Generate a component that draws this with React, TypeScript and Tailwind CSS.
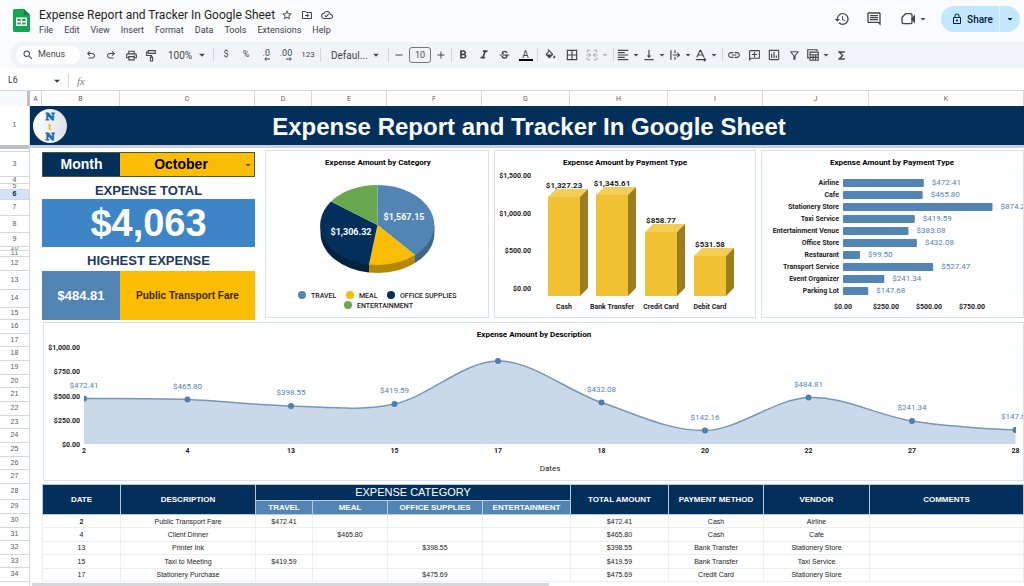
import { useState } from 'react';
import type { ReactNode } from 'react';
import {
  MdAdd,
  MdArrowDropDown,
  MdBorderAll,
  MdFormatAlignLeft,
  MdFormatBold,
  MdFormatItalic,
  MdFunctions,
  MdHistory,
  MdLink,
  MdLockOutline,
  MdOutlineAddComment,
  MdOutlineCloudDone,
  MdOutlineFilterAlt,
  MdOutlineInsertChart,
  MdOutlineInsertComment,
  MdOutlinePrint,
  MdRemove,
  MdSearch,
  MdStarBorder,
  MdStrikethroughS,
  MdVerticalAlignBottom,
} from 'react-icons/md';

const MENUS = ['File', 'Edit', 'View', 'Insert', 'Format', 'Data', 'Tools', 'Extensions', 'Help'];

const COLUMNS = [
  { name: 'A', width: 'w-3' },
  { name: 'B', width: 'w-[78px]' },
  { name: 'C', width: 'w-[135px]' },
  { name: 'D', width: 'w-[57px]' },
  { name: 'E', width: 'w-[75px]' },
  { name: 'F', width: 'w-[95px]' },
  { name: 'G', width: 'w-[88px]' },
  { name: 'H', width: 'w-[98px]' },
  { name: 'I', width: 'w-[95px]' },
  { name: 'J', width: 'w-[106px]' },
  { name: 'K', width: 'flex-1' },
];

const TOP_ROWS = [
  { n: 3, height: 'h-[25px]' },
  { n: 4, height: 'h-[7px]' },
  { n: 5, height: 'h-[6px]' },
  { n: 6, height: 'h-[10px]' },
  { n: 7, height: 'h-4' },
  { n: 8, height: 'h-[17px]' },
  { n: 9, height: 'h-[14px]' },
  { n: 10, height: 'h-1' },
  { n: 11, height: 'h-[6px]' },
  { n: 12, height: 'h-[14px]' },
  { n: 13, height: 'h-[19px]' },
  { n: 14, height: 'h-[18px]' },
  { n: 15, height: 'h-3' },
];

const CHART_ROWS = [16, 17, 18, 19, 20, 21, 22, 23, 24, 25, 26, 27];
const DATA_ROWS = [30, 31, 32, 33, 34];

const PAYMENT_TYPES = [
  { label: 'Cash', value: '$1,327.23', x: 54, top: 47 },
  { label: 'Bank Transfer', value: '$1,345.61', x: 102, top: 45 },
  { label: 'Credit Card', value: '$858.77', x: 151, top: 82 },
  { label: 'Debit Card', value: '$531.58', x: 200, top: 106 },
];

const VENDORS = [
  { label: 'Airline', amount: 472.41 },
  { label: 'Cafe', amount: 465.8 },
  { label: 'Stationery Store', amount: 874.24 },
  { label: 'Taxi Service', amount: 419.59 },
  { label: 'Entertainment Venue', amount: 383.08 },
  { label: 'Office Store', amount: 432.08 },
  { label: 'Restaurant', amount: 99.5 },
  { label: 'Transport Service', amount: 527.47 },
  { label: 'Event Organizer', amount: 241.34 },
  { label: 'Parking Lot', amount: 147.68 },
];

const DAILY = [
  { day: 2, label: '$472.41', y: 75.5 },
  { day: 4, label: '$465.80', y: 76.5 },
  { day: 13, label: '$398.55', y: 83 },
  { day: 15, label: '$419.59', y: 81 },
  { day: 17, label: '', y: 38 },
  { day: 18, label: '$432.08', y: 79.5 },
  { day: 20, label: '$142.16', y: 107.5 },
  { day: 22, label: '$484.81', y: 74.5 },
  { day: 27, label: '$241.34', y: 98 },
  { day: 28, label: '$147.68', y: 107 },
];

const EXPENSES = [
  { date: 2, description: 'Public Transport Fare', travel: '$472.41', total: '$472.41', method: 'Cash', vendor: 'Airline' },
  { date: 4, description: 'Client Dinner', meal: '$465.80', total: '$465.80', method: 'Cash', vendor: 'Cafe' },
  { date: 13, description: 'Printer Ink', office: '$398.55', total: '$398.55', method: 'Bank Transfer', vendor: 'Stationery Store' },
  { date: 15, description: 'Taxi to Meeting', travel: '$419.59', total: '$419.59', method: 'Bank Transfer', vendor: 'Taxi Service' },
  { date: 17, description: 'Stationery Purchase', office: '$475.69', total: '$475.69', method: 'Credit Card', vendor: 'Stationery Store' },
];

const Tool = ({ label, className = 'w-5', children }: { label: string; className?: string; children: ReactNode }) => (
  <button aria-label={label} className={`flex h-5 shrink-0 items-center justify-center rounded hover:bg-black/5 ${className}`}>
    {children}
  </button>
);

const DropTool = ({ label, children }: { label: string; children: ReactNode }) => (
  <button aria-label={label} className="flex h-5 w-[26px] shrink-0 items-center justify-center rounded hover:bg-black/5">
    {children}
    <MdArrowDropDown className="-mr-1 h-3 w-3" />
  </button>
);

const Divider = ({ className = '' }: { className?: string }) => (
  <div className={`h-[14px] w-px shrink-0 bg-[#d3d7dc] ${className}`} />
);

const UndoIcon = ({ className = '' }: { className?: string }) => (
  <svg viewBox="0 -960 960 960" className={`h-3 w-3 ${className}`} fill="currentColor">
    <path d="M280-200v-80h284q63 0 109.5-40T720-420q0-60-46.5-100T564-560H312l104 104-56 56-200-200 200-200 56 56-104 104h252q97 0 166.5 63T800-420q0 94-69.5 157T564-200H280Z" />
  </svg>
);

const SheetsLogo = () => (
  <svg viewBox="0 0 17 23" className="h-[23px] w-[17px] shrink-0">
    <path d="M1.5 0H11l6 6v15.500a1.500 1.500 0 0 1-1.500 1.500h-14A1.500 1.500 0 0 1 0 21.500v-20A1.500 1.500 0 0 1 1.500 0z" fill="#14a750" />
    <path d="M11 0l6 6h-4.500A1.500 1.500 0 0 1 11 4.500z" fill="#0b8040" />
    <path d="M3 8.500h11v8.500H3zM4.400 9.900v2.200h3.400V9.900zm4.800 0v2.200h3.400V9.900zM4.400 13.400v2.200h3.400v-2.200zm4.800 0v2.200h3.400v-2.200z" fill="#fff" fillRule="evenodd" />
  </svg>
);

const TitleBar = () => (
  <header className="flex h-[42px] shrink-0 items-start bg-[#f9fbfd] pl-[13px]">
    <div className="pt-[9px]">
      <SheetsLogo />
    </div>
    <div className="ml-[9px] pt-2">
      <div className="flex items-center text-[#3c4043]">
        <h1 className="text-[12px] leading-[14px] text-[#1f1f1f]">Expense Report and Tracker In Google Sheet</h1>
        <button aria-label="Star" className="ml-[6px]">
          <MdStarBorder className="h-3 w-3" />
        </button>
        <button aria-label="Move" className="ml-2">
          <svg viewBox="0 0 24 24" className="h-3 w-3" fill="none" stroke="currentColor" strokeWidth="2">
            <path d="M3 5h6l2 2h10v12H3z" />
            <path d="M8 13h7M12.500 10l3 3-3 3" />
          </svg>
        </button>
        <button aria-label="Document status" className="ml-2">
          <MdOutlineCloudDone className="h-3 w-3" />
        </button>
      </div>
      <nav className="flex gap-[11px] pt-[2px] text-[9px] leading-3 text-[#3c4043]">
        {MENUS.map((menu) => (
          <button key={menu}>{menu}</button>
        ))}
      </nav>
    </div>
    <div className="ml-auto flex items-center pt-[6px] pr-1 text-[#444746]">
      <button aria-label="Version history">
        <MdHistory className="h-4 w-4" />
      </button>
      <button aria-label="Comments" className="ml-4">
        <MdOutlineInsertComment className="h-4 w-4" />
      </button>
      <button aria-label="Join a call" className="ml-[18px] flex items-center">
        <svg viewBox="0 0 24 24" className="h-4 w-4" fill="none" stroke="currentColor" strokeWidth="2">
          <path d="M8.500 4h7.500a2 2 0 0 1 2 2v11a2 2 0 0 1-2 2H5a2 2 0 0 1-2-2V9.500z" strokeLinejoin="round" />
          <path d="M18 12l3.500-4v8z" fill="currentColor" />
        </svg>
        <MdArrowDropDown className="ml-px h-3 w-3" />
      </button>
      <div className="ml-3 flex h-[26px] items-center rounded-full bg-[#c2e7ff] text-[#001d35]">
        <button className="flex h-full w-[58px] items-center justify-center gap-1 pl-1 text-[10px] font-medium">
          <MdLockOutline className="h-3 w-3" />
          Share
        </button>
        <div className="h-full w-px bg-[#e6f4fd]" />
        <button aria-label="Share options" className="flex h-full w-5 items-center justify-center">
          <MdArrowDropDown className="h-3 w-3" />
        </button>
      </div>
    </div>
  </header>
);

const Toolbar = () => (
  <div className="h-[26px] shrink-0 bg-[#f9fbfd] pl-[10px]">
    <div className="flex h-full items-center rounded-l-full bg-[#f0f4f9] pl-[6px] text-[9px] text-[#444746]">
      <button className="mr-px flex h-[18px] w-16 shrink-0 items-center gap-1 rounded-full bg-white pl-[6px]">
        <MdSearch className="h-3 w-3" />
        Menus
      </button>
      <Tool label="Undo"><UndoIcon /></Tool>
      <Tool label="Redo"><UndoIcon className="-scale-x-100" /></Tool>
      <Tool label="Print"><MdOutlinePrint className="h-[13px] w-[13px]" /></Tool>
      <Tool label="Paint format">
        <svg viewBox="0 0 24 24" className="h-[13px] w-[13px]" fill="none" stroke="currentColor" strokeWidth="2">
          <path d="M6 3h13v5H6zM6 5.500H3V12h9v3" />
          <path d="M10 15h4v7h-4z" />
        </svg>
      </Tool>
      <button className="flex h-5 w-[52px] shrink-0 items-center justify-between pr-1 pl-[7px] text-[10px]">
        100%
        <MdArrowDropDown className="h-[14px] w-[14px]" />
      </button>
      <Divider className="mr-[2px]" />
      <Tool label="Format as currency">$</Tool>
      <Tool label="Format as percent">%</Tool>
      <Tool label="Decrease decimal places">
        <span className="flex flex-col items-end text-[9px] leading-[7px]">
          .0
          <svg viewBox="0 0 8 4" className="h-1 w-2" fill="none" stroke="currentColor">
            <path d="M8 2H3M4.500 .3L2.700 2l1.800 1.700" />
          </svg>
        </span>
      </Tool>
      <Tool label="Increase decimal places">
        <span className="flex flex-col items-end text-[9px] leading-[7px]">
          .00
          <svg viewBox="0 0 8 4" className="h-1 w-2" fill="none" stroke="currentColor">
            <path d="M2 2h5M5.500 .3L7.300 2 5.500 3.700" />
          </svg>
        </span>
      </Tool>
      <Tool label="More formats" className="w-6 text-[8px]">123</Tool>
      <Divider />
      <button className="flex h-5 w-[67px] shrink-0 items-center justify-between pr-[5px] pl-[10px] text-[10px]">
        Defaul...
        <MdArrowDropDown className="h-[14px] w-[14px]" />
      </button>
      <Divider />
      <Tool label="Decrease font size"><MdRemove className="h-3 w-3" /></Tool>
      <input
        aria-label="Font size"
        defaultValue="10"
        className="h-4 w-[22px] shrink-0 rounded-[3px] border border-[#747775] text-center text-[9px]"
      />
      <Tool label="Increase font size"><MdAdd className="h-3 w-3" /></Tool>
      <Divider />
      <Tool label="Bold" className="w-[21px]"><MdFormatBold className="h-[14px] w-[14px]" /></Tool>
      <Tool label="Italic" className="w-[21px]"><MdFormatItalic className="h-[14px] w-[14px]" /></Tool>
      <Tool label="Strikethrough" className="w-[21px]"><MdStrikethroughS className="h-[13px] w-[13px]" /></Tool>
      <Tool label="Text color" className="w-[21px]">
        <span className="flex flex-col items-center text-[10px] leading-[9px]">
          A
          <span className="h-[2px] w-[14px] bg-black" />
        </span>
      </Tool>
      <Divider className="mx-px" />
      <Tool label="Fill color" className="w-[22px]">
        <svg viewBox="0 0 24 24" className="h-[13px] w-[13px]" fill="currentColor">
          <path d="M16.560 8.940L7.620 0 6.210 1.410l2.380 2.380-5.150 5.150c-.59.59-.59 1.540 0 2.120l5.500 5.500c.29.29.68.44 1.060.44s.77-.15 1.060-.44l5.500-5.500c.59-.58.59-1.530 0-2.120zM5.210 10L10 5.210 14.790 10H5.210zM19 11.500s-2 2.170-2 3.500c0 1.100.9 2 2 2s2-.9 2-2c0-1.330-2-3.500-2-3.500z" />
          <path d="M0 20h24v4H0z" fill="#fff" />
        </svg>
      </Tool>
      <Tool label="Borders" className="w-[22px]"><MdBorderAll className="h-[14px] w-[14px]" /></Tool>
      <button aria-label="Merge cells" className="flex h-5 w-[30px] shrink-0 items-center justify-center text-[#b4b7ba]">
        <svg viewBox="0 0 24 24" className="h-[14px] w-[14px]" fill="none" stroke="currentColor" strokeWidth="2">
          <path d="M9 4H4v4M15 4h5v4M9 20H4v-4M15 20h5v-4M2 12h7M6.500 9l3 3-3 3M22 12h-7M17.500 9l-3 3 3 3" />
        </svg>
        <MdArrowDropDown className="h-3 w-3" />
      </button>
      <Divider />
      <DropTool label="Horizontal align"><MdFormatAlignLeft className="h-[14px] w-[14px]" /></DropTool>
      <DropTool label="Vertical align"><MdVerticalAlignBottom className="h-[14px] w-[14px]" /></DropTool>
      <DropTool label="Text wrapping">
        <svg viewBox="0 0 24 24" className="h-[14px] w-[14px]" fill="none" stroke="currentColor" strokeWidth="2">
          <path d="M5 4v16M12 4v5M12 15v5M8 12h11M16 8.500l3.500 3.500-3.500 3.500" />
        </svg>
      </DropTool>
      <DropTool label="Text rotation">
        <svg viewBox="0 0 24 24" className="h-[14px] w-[14px]" fill="none" stroke="currentColor" strokeWidth="2">
          <path d="M5 16L10.500 4h1L17 16M7 12h8M3 20h17M17 17l3 3-3 3" />
        </svg>
      </DropTool>
      <Divider className="mr-px ml-1" />
      <Tool label="Insert link"><MdLink className="h-[14px] w-[14px]" /></Tool>
      <Tool label="Insert comment"><MdOutlineAddComment className="h-[13px] w-[13px] -scale-x-100" /></Tool>
      <Tool label="Insert chart"><MdOutlineInsertChart className="h-[14px] w-[14px]" /></Tool>
      <Tool label="Create a filter"><MdOutlineFilterAlt className="h-[13px] w-[13px]" /></Tool>
      <DropTool label="Filter views">
        <svg viewBox="0 0 24 24" className="h-[14px] w-[14px]" fill="none" stroke="currentColor" strokeWidth="2">
          <path d="M19 5V3H3v14h3" />
          <path d="M7 7h14v14H7zM7 11.500h14M7 16h14M12 11v10M16.500 11v10" />
        </svg>
      </DropTool>
      <Tool label="Functions" className="w-[22px]"><MdFunctions className="h-[13px] w-[13px]" /></Tool>
    </div>
  </div>
);

const FormulaBar = () => (
  <div className="flex h-[22px] shrink-0 items-center bg-white pt-1 pl-2 text-[9px] text-[#3c4043]">
    <input aria-label="Name box" defaultValue="L6" className="w-10" />
    <MdArrowDropDown className="ml-[2px] h-[14px] w-[14px]" />
    <Divider className="mx-1" />
    <label htmlFor="formula" className="px-1 font-['Liberation_Serif'] text-[11px] text-[#80868b] italic">fx</label>
    <input id="formula" className="flex-1" />
  </div>
);

const ColumnHeads = () => (
  <div className="flex h-4 shrink-0 border-t border-[#d5d7da] bg-white text-[7px] text-[#575b5f]">
    <div className="w-[30px] shrink-0 border-r-[3px] border-[#bdbfc1] bg-[#f8f9fa]" />
    {COLUMNS.map(({ name, width }) => (
      <div key={name} className={`flex items-center justify-center border-r border-[#d5d7da] pt-px ${width}`}>
        {name}
      </div>
    ))}
  </div>
);

const RowHeads = () => (
  <div className="w-[30px] shrink-0 border-r border-[#d5d7da] text-center text-[7px] text-[#575b5f]">
    <div className="flex h-[39px] items-center justify-center">1</div>
    <div className="h-1 bg-[#bdbfc1]" />
    <div className="h-[3px] border-b border-[#d5d7da]" />
    {TOP_ROWS.map(({ n, height }) => (
      <div
        key={n}
        className={`flex items-center justify-center overflow-hidden border-b border-[#d5d7da] ${height} ${n === 6 ? 'bg-[#d3e3fd] font-bold text-[#041e49]' : ''}`}
      >
        {n}
      </div>
    ))}
    <div className="grid h-[164px] auto-rows-fr">
      {CHART_ROWS.map((n) => (
        <div key={n} className="flex items-center justify-center border-b border-[#d5d7da]">{n}</div>
      ))}
    </div>
    <div className="flex h-4 items-center justify-center border-b border-[#d5d7da]">28</div>
    <div className="flex h-[14px] items-center justify-center border-b border-[#d5d7da]">29</div>
    <div className="grid h-[68px] auto-rows-fr">
      {DATA_ROWS.map((n) => (
        <div key={n} className="flex items-center justify-center border-b border-[#d5d7da]">{n}</div>
      ))}
    </div>
  </div>
);

const Banner = () => (
  <div className="flex h-[39px] items-center bg-[#03305b]">
    <svg viewBox="0 0 36 36" className="ml-[2px] h-9 w-9 shrink-0">
      <defs>
        <linearGradient id="badge">
          <stop offset="0" stopColor="#fff" />
          <stop offset="1" stopColor="#dde3ea" />
        </linearGradient>
      </defs>
      <circle cx="18" cy="18" r="17" fill="url(#badge)" />
      <g textAnchor="middle" className="font-['DejaVu_Serif',serif] text-[10px] font-bold">
        <text x="18" y="12" fill="#1d6fb5" stroke="#1d6fb5">N</text>
        <text x="18" y="22" className="text-[9px]" fill="#fbbc04">t</text>
        <text x="18" y="32" fill="#1d6fb5" stroke="#1d6fb5">N</text>
      </g>
    </svg>
    <h2 className="flex-1 pt-[2px] pr-[34px] text-center text-[24px] font-bold text-white">
      Expense Report and Tracker In Google Sheet
    </h2>
  </div>
);

const Summary = () => {
  const [month, setMonth] = useState('October');

  return (
    <section className="w-[213px] shrink-0 pt-[3px] text-center font-bold text-[#1c3a5e]">
      <div className="flex h-[25px] border border-[#4a5a2c] text-[14px]">
        <label htmlFor="month" className="flex w-[77px] items-center justify-center bg-[#03305b] text-white">Month</label>
        <div className="relative flex-1">
          <select
            id="month"
            value={month}
            onChange={(e) => setMonth(e.target.value)}
            className="h-full w-full appearance-none bg-[#fbbc04] pr-3 text-center text-black [text-align-last:center]"
          >
            <option>September</option>
            <option>October</option>
            <option>November</option>
          </select>
          <MdArrowDropDown className="pointer-events-none absolute top-[6px] right-0 h-3 w-3 text-[#5f4a10]" />
        </div>
      </div>
      <h3 className="h-[22px] pt-1 text-[13px] leading-5">EXPENSE TOTAL</h3>
      <p className="flex h-12 items-center justify-center bg-[#3d85c6] text-[38px] text-white">$4,063</p>
      <h3 className="h-6 pt-1 text-[13px] leading-5">HIGHEST EXPENSE</h3>
      <div className="flex h-[49px] items-center">
        <p className="flex h-full w-[78px] items-center justify-center bg-[#5285b3] text-[13px] text-white">$484.81</p>
        <p className="flex h-full flex-1 items-center justify-center bg-[#fbbc04] text-[10px] text-[#3b1f0a]">Public Transport Fare</p>
      </div>
    </section>
  );
};

const CategoryPie = () => (
  <svg viewBox="0 0 222 166" className="w-full text-[7px]" fill="#222">
    <text x="112" y="14" textAnchor="middle" className="text-[8px] font-bold" fill="#000">Expense Amount by Category</text>
    <path d="M168.500 74v8A57 40 0 0 1 149 112v-8z" fill="#3f6789" />
    <path d="M149 104v8A57 40 0 0 1 103 121.500v-8z" fill="#b38805" />
    <path d="M103 113.500v8A57 40 0 0 1 54.500 82v-8z" fill="#02223f" />
    <path d="M111.500 74V34A57 40 0 0 1 149 104z" fill="#5285b3" />
    <path d="M111.500 74L149 104A57 40 0 0 1 103 113.500z" fill="#fbbc04" />
    <path d="M111.500 74L103 113.500A57 40 0 0 1 65 50.500z" fill="#03305b" />
    <path d="M111.500 74L65 50.500A57 40 0 0 1 111.500 34z" fill="#6aa84f" />
    <g className="text-[9px] font-bold" fill="#fff" textAnchor="middle">
      <text x="138" y="69">$1,567.15</text>
      <text x="85" y="84">$1,306.32</text>
    </g>
    <g className="font-medium">
      <circle cx="36" cy="144" r="4" fill="#5285b3" />
      <text x="45" y="147">TRAVEL</text>
      <circle cx="84" cy="144" r="4" fill="#fbbc04" />
      <text x="93" y="147">MEAL</text>
      <circle cx="125" cy="144" r="4" fill="#03305b" />
      <text x="134" y="147">OFFICE SUPPLIES</text>
      <circle cx="82" cy="154" r="4" fill="#6aa84f" />
      <text x="91" y="157">ENTERTAINMENT</text>
    </g>
  </svg>
);

const PaymentBars = () => (
  <svg viewBox="0 0 260 166" className="w-full text-[7px] font-bold" fill="#222">
    <text x="130" y="14" textAnchor="middle" className="text-[8px]" fill="#000">Expense Amount by Payment Type</text>
    {['$1,500.00', '$1,000.00', '$500.00', '$0.00'].map((tick, i) => (
      <text key={tick} x="36" y={27 + i * 37.5} textAnchor="end">{tick}</text>
    ))}
    {PAYMENT_TYPES.map(({ label, value, x, top }) => (
      <g key={label} transform={`translate(${x - 1} ${top - 1})`}>
        <path d={`M0 0H32V${146 - top}H0z`} fill="#f0c233" />
        <path d="M0 0L8-8H40L32 0z" fill="#f3cd56" />
        <path d={`M32 0L40-8V${138 - top}L32 ${146 - top}z`} fill="#9c7d20" />
        <text x="16" y="-9" textAnchor="middle" className="text-[8px]">{value}</text>
        <text x="16" y={159 - top} textAnchor="middle">{label}</text>
      </g>
    ))}
  </svg>
);

const VendorBars = () => (
  <svg viewBox="0 0 261 166" className="w-full text-[7px] font-bold" fill="#222">
    <text x="130" y="14" textAnchor="middle" className="text-[8px]" fill="#000">Expense Amount by Payment Type</text>
    {VENDORS.map(({ label, amount }, i) => (
      <g key={label} transform={`translate(81 ${32 + i * 12})`}>
        <text x="-4" y="2" textAnchor="end">{label}</text>
        <rect y="-4" width={amount * 0.171} height="8" rx="1" fill="#5285b3" />
        <text x={amount * 0.171 + 8} y="2" className="text-[8px] font-normal" fill="#5285b3">
          ${amount.toFixed(2)}
        </text>
      </g>
    ))}
    {['$0.00', '$250.00', '$500.00', '$750.00'].map((tick, i) => (
      <text key={tick} x={81 + i * 43} y="158" textAnchor="middle">{tick}</text>
    ))}
  </svg>
);

const pointX = (i: number) => 40 + i * 103.5;

// Catmull-Rom spline through the daily points, written as cubic segments
const curve = DAILY.slice(1).reduce((path, point, i) => {
  const from = DAILY[i];
  const before = DAILY[Math.max(i - 1, 0)];
  const after = DAILY[Math.min(i + 2, DAILY.length - 1)];
  const c1 = from.y + (point.y - before.y) / 6;
  const c2 = point.y - (after.y - from.y) / 6;
  return `${path}C${pointX(i) + 34.5} ${c1} ${pointX(i + 1) - 34.5} ${c2} ${pointX(i + 1)} ${point.y}`;
}, `M${pointX(0)} ${DAILY[0].y}`);

const DescriptionArea = () => (
  <svg viewBox="0 0 979 157" className="w-full text-[7px] font-bold" fill="#222">
    <defs>
      <clipPath id="plot">
        <rect x="40" y="20" width="932" height="110" />
      </clipPath>
    </defs>
    <text x="490" y="14" textAnchor="middle" className="text-[8px]" fill="#000">Expense Amount by Description</text>
    {['$1,000.00', '$750.00', '$500.00', '$250.00', '$0.00'].map((tick, i) => (
      <text key={tick} x="36" y={27 + i * 24.25} textAnchor="end">{tick}</text>
    ))}
    <g clipPath="url(#plot)">
      <path d={`${curve}V121H40z`} fill="#cad9e9" />
      <path d={curve} fill="none" stroke="#7497ba" strokeWidth="1.500" />
      {DAILY.map(({ day, y }, i) => (
        <circle key={day} cx={pointX(i)} cy={y} r="3" fill="#4a7fb0" />
      ))}
    </g>
    {DAILY.map(({ day, label, y }, i) => (
      <g key={day} textAnchor="middle">
        <text x={pointX(i)} y={y - 11} className="text-[8px] font-normal" fill="#5285b3">{label}</text>
        <text x={pointX(i)} y="130">{day}</text>
      </g>
    ))}
    <text x="506" y="148" textAnchor="middle" className="text-[8px] font-normal">Dates</text>
  </svg>
);

const Card = ({ className = '', children }: { className?: string; children: ReactNode }) => (
  <div className={`overflow-hidden border border-[#d6e2ee] bg-white font-[Roboto,sans-serif] ${className}`}>{children}</div>
);

const ExpenseTable = () => (
  <table className="mt-[3px] ml-3 h-[98px] w-[calc(100%-12px)] table-fixed border-collapse text-center text-[7px] leading-[9px] text-[#222] [&_td]:border [&_td]:border-[#eceff2] [&_td]:p-0 [&_th]:border [&_th]:border-[#b9c9da] [&_th]:p-0">
    <colgroup>
      <col className="w-[78px]" />
      <col className="w-[135px]" />
      <col className="w-[57px]" />
      <col className="w-[75px]" />
      <col className="w-[95px]" />
      <col className="w-[88px]" />
      <col className="w-[98px]" />
      <col className="w-[95px]" />
      <col className="w-[106px]" />
      <col />
    </colgroup>
    <thead className="bg-[#03305b] text-[8px] text-white">
      <tr className="h-4">
        <th rowSpan={2}>DATE</th>
        <th rowSpan={2}>DESCRIPTION</th>
        <th colSpan={4} className="text-[11px] font-normal">EXPENSE CATEGORY</th>
        <th rowSpan={2}>TOTAL AMOUNT</th>
        <th rowSpan={2}>PAYMENT METHOD</th>
        <th rowSpan={2}>VENDOR</th>
        <th rowSpan={2}>COMMENTS</th>
      </tr>
      <tr className="h-[14px] bg-[#5285b3]">
        <th>TRAVEL</th>
        <th>MEAL</th>
        <th>OFFICE SUPPLIES</th>
        <th>ENTERTAINMENT</th>
      </tr>
    </thead>
    <tbody>
      {EXPENSES.map((row) => (
        <tr key={row.date}>
          <td className={row.date === 2 ? 'font-bold' : ''}>{row.date}</td>
          <td>{row.description}</td>
          <td>{row.travel}</td>
          <td>{row.meal}</td>
          <td>{row.office}</td>
          <td></td>
          <td>{row.total}</td>
          <td>{row.method}</td>
          <td>{row.vendor}</td>
          <td></td>
        </tr>
      ))}
    </tbody>
  </table>
);

const App = () => (
  <div className="flex h-screen flex-col overflow-hidden bg-white font-[Roboto,sans-serif]">
    <TitleBar />
    <Toolbar />
    <FormulaBar />
    <ColumnHeads />
    <main className="flex min-h-0 flex-1 overflow-hidden font-['Liberation_Sans',sans-serif]">
      <RowHeads />
      <div className="min-w-0 flex-1">
        <Banner />
        <div className="h-1 border-b border-white bg-[#c9cee0]" />
        <div className="flex items-start pl-3">
          <Summary />
          <div className="ml-[10px] grid flex-1 grid-cols-[224fr_262fr_263fr] gap-[5px] pt-px">
            <Card><CategoryPie /></Card>
            <Card><PaymentBars /></Card>
            <Card><VendorBars /></Card>
          </div>
        </div>
        <Card className="mt-[2px] ml-[13px]"><DescriptionArea /></Card>
        <ExpenseTable />
        <div className="mt-px ml-[2px] h-1 w-[52%] bg-[#d5d7da]" />
      </div>
    </main>
  </div>
);

export default App;
